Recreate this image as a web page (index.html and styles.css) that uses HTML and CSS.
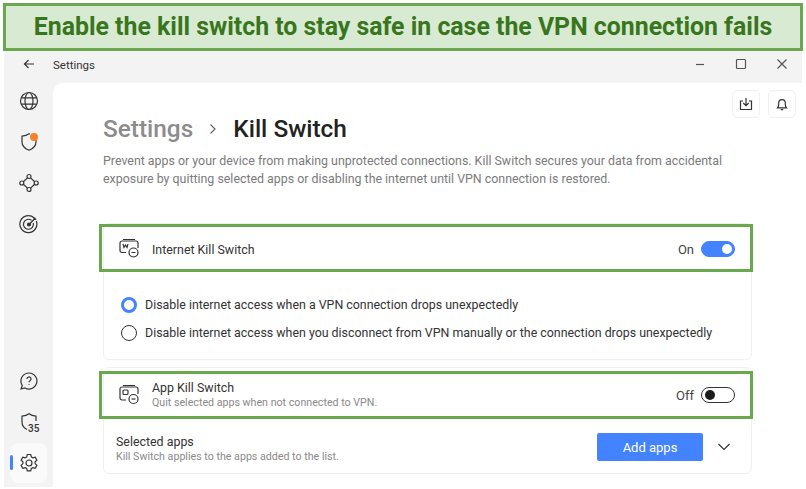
FILE: index.html
```html
<!DOCTYPE html>
<html>
<head>
    <title>Kill Switch</title>
    <meta charset="UTF-8">
    <link rel="stylesheet" href="styles.css">
</head>
<body>
    <div class="banner">Enable the kill switch to stay safe in case the VPN connection fails</div>

    <div class="app">
        <div class="titlebar">
            <svg class="back-icon" width="12" height="12" viewBox="0 0 12 12"><path d="M11 6H1.500M5.500 2 1.500 6l4 4"/></svg>
            <span class="title">Settings</span>
            <div class="win-controls">
                <svg width="12" height="12" viewBox="0 0 12 12"><path d="M2 6.500h8"/></svg>
                <svg width="12" height="12" viewBox="0 0 12 12"><rect x="1.500" y="1.500" width="9" height="9" rx="1"/></svg>
                <svg width="12" height="12" viewBox="0 0 12 12"><path d="M1.500 1.500l9 9M10.500 1.500l-9 9"/></svg>
            </div>
        </div>

        <div class="main">
            <nav class="sidebar">
                <div class="nav-group nav-top">
                    <div class="nav-item">
                        <svg width="20" height="20" viewBox="0 0 20 20"><circle cx="10" cy="10" r="8.500"/><ellipse cx="10" cy="10" rx="4" ry="8.500"/><path d="M2.300 6.800h15.400M2.300 13.200h15.400"/></svg>
                    </div>
                    <div class="nav-item">
                        <svg width="20" height="20" viewBox="0 0 20 20"><path d="M11 2 10 1.800C8 3.300 5.500 4 3 4.200V10c0 4 3 6.700 7 8.200 4-1.500 7-4.200 7-8.200V7"/></svg>
                        <span class="dot"></span>
                    </div>
                    <div class="nav-item">
                        <svg width="20" height="20" viewBox="0 0 20 20"><circle cx="10" cy="3.500" r="2"/><circle cx="2.800" cy="10" r="2"/><circle cx="17.200" cy="10" r="2"/><circle cx="10" cy="16.500" r="2"/><path d="M8.500 4.900 4.300 8.700M11.500 4.900l4.200 3.800M4.300 11.300l4.200 3.800M15.700 11.300l-4.200 3.800"/></svg>
                    </div>
                    <div class="nav-item">
                        <svg width="20" height="20" viewBox="0 0 20 20"><path d="M15 3.700A8.500 8.500 0 1 0 17.300 7"/><path d="M12.500 6.300A5 5 0 1 0 14.300 9"/><circle class="solid" cx="10" cy="10.500" r="1.500"/><path d="M10 10.500 16.500 4M15 3.200v2.300h2.300"/></svg>
                    </div>
                </div>
                <div class="nav-group">
                    <div class="nav-item">
                        <svg width="20" height="20" viewBox="0 0 20 20"><path d="M2 18l1.300-3.500A8 8 0 1 1 6 17z"/><path d="M8 8a2 2 0 1 1 3 1.700c-.7.400-1 .8-1 1.500M10 13.300v.7"/></svg>
                    </div>
                    <div class="nav-item">
                        <svg width="20" height="20" viewBox="0 0 20 20"><path d="M17 9V4.200C14.500 4 12 3.300 10 1.800 8 3.300 5.500 4 3 4.200V10c0 3.500 2 6 5 7.500"/></svg>
                        <span class="badge-num">35</span>
                    </div>
                    <div class="nav-item nav-active">
                        <span class="active-bar"></span>
                        <svg width="20" height="20" viewBox="0 0 20 20"><circle cx="10" cy="10" r="3"/><path d="M8.300 1.500h3.400l.6 2.400 1.500.9 2.400-.7 1.700 3-1.800 1.700v1.800l1.800 1.700-1.700 3-2.400-.7-1.500.9-.6 2.400H8.300l-.6-2.400-1.500-.9-2.400.7-1.700-3 1.800-1.700V8.800L2.100 7.100l1.700-3 2.400.7 1.500-.9z"/></svg>
                    </div>
                </div>
            </nav>

            <div class="content">
                <div class="top-actions">
                    <div class="icon-btn">
                        <svg width="14" height="14" viewBox="0 0 14 14"><path d="M7 1v7.500M4.300 6 7 8.700 9.700 6M4 4H1.500v8.500h11V4H10"/></svg>
                    </div>
                    <div class="icon-btn">
                        <svg width="14" height="14" viewBox="0 0 14 14"><path d="M2.500 10.800h9c-.9-1-1.200-1.800-1.200-3.300V6a3.300 3.300 0 0 0-6.600 0v1.500c0 1.500-.3 2.300-1.200 3.300zM5.800 12.700h2.400"/></svg>
                    </div>
                </div>

                <h1 class="heading">
                    <span class="crumb">Settings</span>
                    <svg class="crumb-sep" width="10" height="12" viewBox="0 0 10 12"><path d="M2.500 1.500 7 6l-4.500 4.500"/></svg>
                    <span>Kill Switch</span>
                </h1>
                <p class="intro">Prevent apps or your device from making unprotected connections. Kill Switch secures your data from accidental exposure by quitting selected apps or disabling the internet until VPN connection is restored.</p>

                <section class="card first-card">
                    <div class="row highlight">
                        <svg class="row-icon" width="22" height="22" viewBox="0 0 22 22"><path d="M5 1.500h12M8 14.500H4a2 2 0 0 1-2-2V5a2 2 0 0 1 2-2h14a2 2 0 0 1 2 2v5"/><circle cx="15.500" cy="14.500" r="4.500"/><path d="M13.500 14.500h4M5 6l1 3.500L7.500 7 9 9.500 10 6"/></svg>
                        <span class="row-title row-single">Internet Kill Switch</span>
                        <span class="state">On</span>
                        <span class="toggle toggle-on"></span>
                    </div>
                    <div class="options">
                        <label class="option"><span class="radio radio-on"></span>Disable internet access when a VPN connection drops unexpectedly</label>
                        <label class="option"><span class="radio"></span>Disable internet access when you disconnect from VPN manually or the connection drops unexpectedly</label>
                    </div>
                </section>

                <section class="card">
                    <div class="row highlight app-row">
                        <svg class="row-icon" width="22" height="22" viewBox="0 0 22 22"><path d="M5 1.500h12M8 16H4a2 2 0 0 1-2-2V5a2 2 0 0 1 2-2h14a2 2 0 0 1 2 2v5"/><circle cx="15.500" cy="15" r="4.500"/><path d="M13.500 15h4"/><rect x="5" y="6" width="5" height="4.500" rx="1"/></svg>
                        <div class="row-text">
                            <div class="row-title">App Kill Switch</div>
                            <div class="row-sub">Quit selected apps when not connected to VPN.</div>
                        </div>
                        <span class="state">Off</span>
                        <span class="toggle"></span>
                    </div>
                    <div class="apps-row">
                        <div class="row-text">
                            <div class="row-title">Selected apps</div>
                            <div class="row-sub">Kill Switch applies to the apps added to the list.</div>
                        </div>
                        <button class="add-btn">Add apps</button>
                        <svg class="chevron" width="12" height="12" viewBox="0 0 12 12"><path d="M.5 3 6 8.500 11.500 3"/></svg>
                    </div>
                </section>
            </div>
        </div>
    </div>
</body>
</html>
```

FILE: styles.css
```css
* {
    margin: 0;
    padding: 0;
    box-sizing: border-box;
}

html, body {
    height: 489px;
    overflow: hidden;
}

body {
    font-family: Roboto, "Noto Sans", sans-serif;
    background: white;
    color: #2b2b2b;
    display: flex;
    flex-direction: column;
}

svg {
    fill: none;
    stroke: #333;
    stroke-width: 1.2;
    flex-shrink: 0;
}

.banner {
    margin: 3px 3px 0;
    height: 48px;
    background: #d9ead3;
    border: 3px solid #6aa84f;
    color: #38761d;
    font-weight: 700;
    font-size: 24.850px;
    line-height: 41px;
    text-align: center;
    white-space: nowrap;
}

.app {
    margin: 0 4px 2px;
    flex: 1;
    min-height: 0;
    background: #f3f3f3;
    display: flex;
    flex-direction: column;
}

.titlebar {
    height: 32px;
    display: flex;
    align-items: center;
    padding: 0 0 7px 19px;
    flex-shrink: 0;
}

.title {
    font-size: 11.500px;
    margin-left: 18px;
    padding-top: 3px;
    color: #333;
}

.win-controls {
    margin-left: auto;
    margin-right: 14px;
    display: flex;
    gap: 29px;
}

.win-controls svg {
    stroke: #555;
}

.main {
    flex: 1;
    min-height: 0;
    display: flex;
}

/* Sidebar */
.sidebar {
    width: 49px;
    flex-shrink: 0;
    display: flex;
    flex-direction: column;
    justify-content: space-between;
    padding: 0 6px 4px;
}

.nav-group {
    display: flex;
    flex-direction: column;
    gap: 1px;
}

.nav-top {
    margin-top: -2px;
}

.nav-item {
    height: 40px;
    display: flex;
    align-items: center;
    justify-content: center;
    position: relative;
}

.nav-active {
    background: #fafafa;
    border-radius: 8px;
}

.active-bar {
    position: absolute;
    left: 0;
    top: 12px;
    width: 3px;
    height: 15px;
    background: #4483ff;
    border-radius: 2px;
}

.dot {
    position: absolute;
    top: 11px;
    left: 20px;
    width: 8px;
    height: 8px;
    border-radius: 50%;
    background: #f5822a;
}

.badge-num {
    position: absolute;
    left: 18px;
    top: 21px;
    font-size: 10px;
    font-weight: 500;
    line-height: 12px;
    color: #333;
    background: #f3f3f3;
}

.solid {
    fill: #333;
}

/* Content */
.content {
    flex: 1;
    min-width: 0;
    background: white;
    border-top-left-radius: 10px;
    padding: 7px 6px 0 50px;
}

.top-actions {
    display: flex;
    justify-content: flex-end;
    gap: 8px;
    height: 28px;
}

.icon-btn {
    width: 28px;
    height: 28px;
    border: 1px solid #f1f1f1;
    border-radius: 5px;
    display: flex;
    align-items: center;
    justify-content: center;
}

.heading {
    display: flex;
    align-items: center;
    gap: 15px;
    font-size: 24.400px;
    font-weight: 500;
    line-height: 34px;
    margin-top: -6px;
    color: #222;
}

.crumb {
    color: #8c8c8c;
}

.crumb-sep {
    stroke: #666;
}

.intro {
    font-size: 12.400px;
    line-height: 18px;
    color: #7b7b7b;
    margin-top: 6px;
    width: 640px;
}

.card {
    margin-right: 44px;
    border: 1px solid #f0f0f0;
    border-radius: 6px;
}

.first-card {
    margin-top: 35px;
    margin-bottom: 7px;
}

.row {
    display: flex;
    align-items: center;
    height: 48px;
    padding: 2px 15px 0 16px;
}

.highlight {
    border: 3px solid #6aa84f;
    margin-left: -5px;
    margin-right: -2px;
}

.app-row {
    margin-top: 3px;
    padding-top: 0;
}

.row-icon {
    margin-right: 12px;
}

.row-title {
    font-size: 12.400px;
    line-height: 16px;
    color: #333;
}

.row-single {
    padding-top: 2px;
}

.row-sub {
    font-size: 10.660px;
    line-height: 14px;
    color: #8a8a8a;
}

.state {
    margin-left: auto;
    margin-right: 7px;
    font-size: 13px;
    color: #444;
}

.toggle {
    width: 34px;
    height: 16px;
    border: 1px solid #333;
    border-radius: 8px;
    position: relative;
}

.toggle::after {
    content: "";
    position: absolute;
    left: 3px;
    top: 2px;
    width: 10px;
    height: 10px;
    border-radius: 50%;
    background: #1c1c1c;
}

.toggle-on {
    background: #4483ff;
    border-color: #4483ff;
}

.toggle-on::after {
    left: auto;
    right: 2px;
    background: white;
}

.options {
    padding: 23px 0 17px 17px;
    display: flex;
    flex-direction: column;
    gap: 9px;
}

.option {
    display: flex;
    align-items: center;
    gap: 8px;
    font-size: 12.400px;
    line-height: 19px;
    color: #333;
    white-space: nowrap;
}

.radio {
    width: 16px;
    height: 16px;
    border: 1.500px solid #333;
    border-radius: 50%;
}

.radio-on {
    border: 3px solid #4483ff;
}

.apps-row {
    display: flex;
    align-items: center;
    padding: 15px 21px 9px 12px;
}

.add-btn {
    margin: -4px 0 0 auto;
    width: 106px;
    height: 28px;
    background: #4483ff;
    color: white;
    border: none;
    border-radius: 2px;
    font-family: inherit;
    font-size: 13px;
}

.chevron {
    margin: -4px 0 0 15px;
}
```
